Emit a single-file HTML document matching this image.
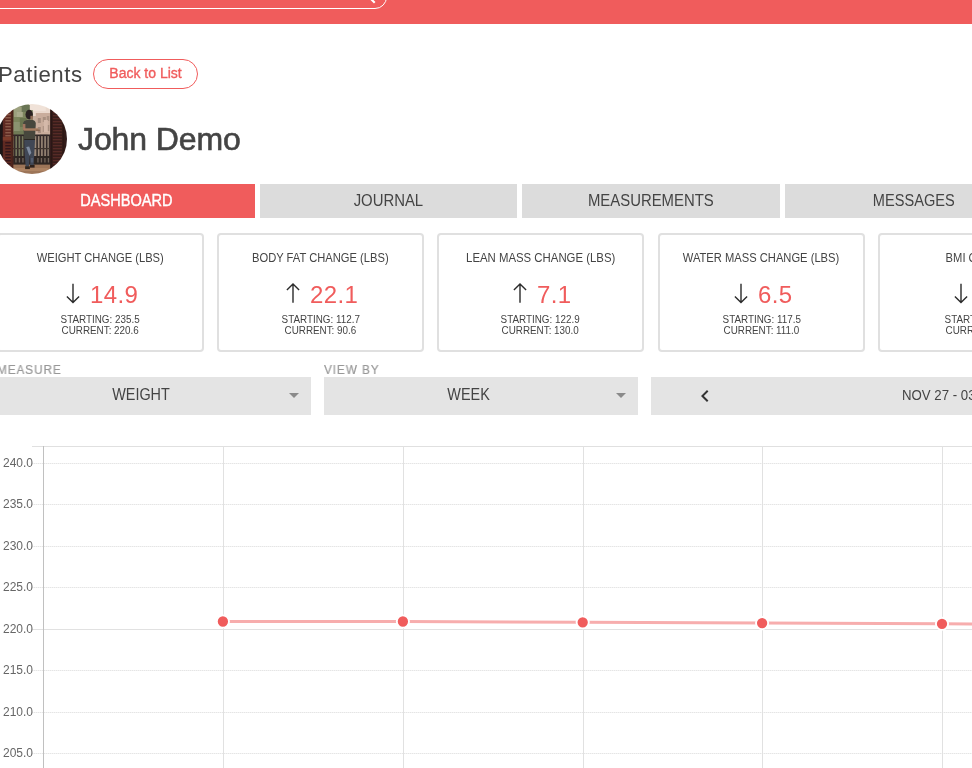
<!DOCTYPE html>
<html lang="en">
<head>
<meta charset="utf-8">
<title>Patients - John Demo</title>
<style>
html,body{margin:0;padding:0;}
body{width:972px;height:768px;overflow:hidden;background:#fff;position:relative;font-family:"Liberation Sans",sans-serif;color:#444;}
.abs{position:absolute;}
.patients,.back,.name,.card .n,.lbl,.ylab,.date{will-change:transform;}
.sx{display:inline-block;white-space:nowrap;}
.hdr{left:0;top:0;width:972px;height:24px;background:#f05c5c;}
.search{left:-40px;top:-22px;width:424.5px;height:29.3px;border:1px solid #fff;border-radius:12px;}
.patients{left:-2.5px;top:60.8px;letter-spacing:0.55px;font-size:22.2px;line-height:28px;color:#444;white-space:nowrap;}
.back{left:93px;top:59px;width:103px;height:28px;border:1px solid #f05c5c;border-radius:15px;color:#f05c5c;font-size:14px;line-height:26px;text-align:center;-webkit-text-stroke:0.35px #f05c5c;}
.name{left:77.5px;top:120px;font-size:32px;letter-spacing:-0.1px;line-height:38px;color:#444;white-space:nowrap;-webkit-text-stroke:0.6px #444;}
.tab{top:184px;height:34px;background:#dcdcdc;color:#444;font-size:15.6px;line-height:34px;text-align:center;}
.tab.on{background:#f05c5c;color:#fff;-webkit-text-stroke:0.4px #fff;}
.card{top:233px;width:203px;height:115px;border:2px solid #e0e0e0;border-radius:4px;background:#fff;text-align:center;}
.card .t{position:absolute;left:0;right:0;top:16px;font-size:12px;line-height:14px;color:#444;}
.card .v{position:absolute;left:0;right:0;top:45px;height:30px;}
.card .n{position:absolute;top:0;font-size:24px;line-height:30px;letter-spacing:0.4px;color:#f05c5c;white-space:nowrap;}
.card .s{position:absolute;left:0;right:0;font-size:10px;line-height:11px;color:#444;}
.lbl{top:363px;font-size:12.5px;line-height:14px;letter-spacing:1px;color:#979797;white-space:nowrap;transform:scaleX(0.94);transform-origin:0 50%;-webkit-text-stroke:0.2px #979797;}
.sel{top:377px;height:38px;width:314px;background:#e4e4e4;}
.sel .tx{position:absolute;left:0;width:288px;top:0;line-height:36px;font-size:16px;text-align:center;color:#444;}
.sel .ar{position:absolute;left:292px;top:16px;width:0;height:0;border-left:5px solid transparent;border-right:5px solid transparent;border-top:5px solid #8a8a8a;}
.date{left:902px;top:377px;line-height:36.4px;font-size:14px;color:#444;white-space:nowrap;}
.ylab{left:0;width:33px;text-align:right;font-size:12px;line-height:14px;color:#666;white-space:nowrap;}
</style>
</head>
<body>
<div class="abs hdr"></div>
<div class="abs search"></div>
<svg class="abs" style="left:354.7px;top:-17.2px" width="24" height="24" viewBox="0 0 24 24"><path d="M15.5 14h-.79l-.28-.27C15.41 12.59 16 11.11 16 9.5 16 5.91 13.09 3 9.5 3S3 5.91 3 9.5 5.91 16 9.5 16c1.61 0 3.09-.59 4.23-1.57l.27.28v.79l5 4.99L20.49 19l-4.99-5zm-6 0C7.01 14 5 11.99 5 9.5S7.01 5 9.5 5 14 7.01 14 9.5 11.99 14 9.5 14z" fill="#fff"/></svg>
<div class="abs patients">Patients</div>
<div class="abs back"><span class="sx">Back to List</span></div>
<svg class="abs" style="left:-2.8px;top:104.0px" width="70" height="70" viewBox="-2.8 104.0 70 70">
<defs><clipPath id="avc"><circle cx="32.2" cy="139.0" r="35"/></clipPath>
<filter id="avb" x="-10%" y="-10%" width="120%" height="120%"><feGaussianBlur stdDeviation="0.6"/></filter></defs>
<g clip-path="url(#avc)"><g filter="url(#avb)">
<rect x="-6.0" y="100.0" width="80.0" height="80.0" fill="#c9b2a2"/>
<rect x="26.0" y="100.0" width="26.0" height="16.0" fill="#ead9cd"/>
<rect x="30.0" y="103.0" width="16.0" height="8.0" fill="#f0e2d8"/>
<rect x="36.0" y="113.0" width="15.0" height="45.0" fill="#c9ad9c"/>
<rect x="38.0" y="118.0" width="3.0" height="5.0" fill="#a58d7e"/>
<rect x="43.0" y="117.0" width="3.0" height="5.0" fill="#a89080"/>
<rect x="47.0" y="116.0" width="2.5" height="5.0" fill="#ab9383"/>
<rect x="38.0" y="127.0" width="3.0" height="6.0" fill="#a38b7c"/>
<rect x="43.0" y="126.0" width="3.0" height="6.0" fill="#a58d7e"/>
<rect x="47.0" y="125.0" width="2.5" height="6.0" fill="#a89080"/>
<rect x="40.0" y="134.0" width="8.0" height="3.0" fill="#b59c8b"/>
<rect x="44.0" y="120.0" width="4.0" height="12.0" fill="#d4b9a9"/>
<rect x="12.0" y="104.0" width="17.0" height="33.0" fill="#7b855d"/>
<rect x="14.0" y="107.0" width="8.0" height="10.0" fill="#9ca07e"/>
<rect x="20.0" y="118.0" width="7.0" height="9.0" fill="#6b7550"/>
<rect x="13.0" y="122.0" width="7.0" height="10.0" fill="#8a9270"/>
<rect x="22.0" y="105.0" width="8.0" height="7.0" fill="#6a7555"/>
<rect x="28.0" y="110.0" width="5.0" height="10.0" fill="#868d6c"/>
<rect x="17.0" y="112.0" width="6.0" height="5.0" fill="#a9ab8c"/>
<rect x="14.0" y="131.0" width="10.0" height="5.0" fill="#707a56"/>
<rect x="12.0" y="135.0" width="13.0" height="30.0" fill="#76785c"/>
<rect x="25.0" y="135.0" width="26.0" height="30.0" fill="#9a8878"/>
<rect x="12.0" y="134.5" width="39.0" height="1.6" fill="#2f2726"/>
<rect x="14.0" y="135.0" width="1.6" height="30.0" fill="#352c2a"/>
<rect x="17.2" y="135.0" width="1.6" height="30.0" fill="#352c2a"/>
<rect x="20.4" y="135.0" width="1.6" height="30.0" fill="#352c2a"/>
<rect x="23.6" y="135.0" width="1.6" height="30.0" fill="#352c2a"/>
<rect x="36.5" y="135.0" width="1.6" height="30.0" fill="#352c2a"/>
<rect x="39.7" y="135.0" width="1.6" height="30.0" fill="#352c2a"/>
<rect x="42.9" y="135.0" width="1.6" height="30.0" fill="#352c2a"/>
<rect x="46.1" y="135.0" width="1.6" height="30.0" fill="#352c2a"/>
<rect x="49.0" y="135.0" width="1.6" height="30.0" fill="#352c2a"/>
<rect x="12.0" y="156.0" width="39.0" height="9.0" fill="#2e2524"/>
<rect x="15.5" y="158.0" width="1.3" height="4.5" fill="#6f6459"/>
<rect x="19.0" y="158.0" width="1.3" height="4.5" fill="#6f6459"/>
<rect x="22.5" y="158.0" width="1.3" height="4.5" fill="#6f6459"/>
<rect x="37.5" y="158.0" width="1.3" height="4.5" fill="#6f6459"/>
<rect x="41.0" y="158.0" width="1.3" height="4.5" fill="#6f6459"/>
<rect x="44.5" y="158.0" width="1.3" height="4.5" fill="#6f6459"/>
<rect x="48.0" y="158.0" width="1.3" height="4.5" fill="#6f6459"/>
<rect x="12.0" y="148.0" width="39.0" height="1.2" fill="#40352f"/>
<rect x="8.0" y="164.6" width="48.0" height="12.0" fill="#9d7558"/>
<rect x="14.0" y="168.0" width="34.0" height="3.0" fill="#ad8364"/>
<rect x="-6.0" y="100.0" width="9.5" height="80.0" fill="#1c1518"/>
<rect x="3.0" y="100.0" width="10.5" height="80.0" fill="#5e2c22"/>
<rect x="5.5" y="108.0" width="5.5" height="1.4" fill="#8a5a48"/>
<rect x="5.5" y="111.0" width="5.5" height="1.4" fill="#8a5a48"/>
<rect x="5.5" y="114.0" width="5.5" height="1.4" fill="#8a5a48"/>
<rect x="5.5" y="117.0" width="5.5" height="1.4" fill="#8a5a48"/>
<rect x="5.5" y="120.0" width="5.5" height="1.4" fill="#8a5a48"/>
<rect x="5.5" y="123.0" width="5.5" height="1.4" fill="#8a5a48"/>
<rect x="5.5" y="126.0" width="5.5" height="1.4" fill="#8a5a48"/>
<rect x="5.5" y="129.0" width="5.5" height="1.4" fill="#8a5a48"/>
<rect x="5.5" y="132.0" width="5.5" height="1.4" fill="#8a5a48"/>
<rect x="5.5" y="135.0" width="5.5" height="1.4" fill="#8a5a48"/>
<rect x="5.5" y="142.0" width="5.5" height="1.5" fill="#35191a"/>
<rect x="5.5" y="145.0" width="5.5" height="1.5" fill="#35191a"/>
<rect x="5.5" y="148.0" width="5.5" height="1.5" fill="#35191a"/>
<rect x="5.5" y="151.0" width="5.5" height="1.5" fill="#35191a"/>
<rect x="5.5" y="154.0" width="5.5" height="1.5" fill="#35191a"/>
<rect x="5.5" y="157.0" width="5.5" height="1.5" fill="#35191a"/>
<rect x="5.5" y="160.0" width="5.5" height="1.5" fill="#35191a"/>
<rect x="5.5" y="163.0" width="5.5" height="1.5" fill="#35191a"/>
<rect x="5.5" y="166.0" width="5.5" height="1.5" fill="#35191a"/>
<rect x="5.5" y="169.0" width="5.5" height="1.5" fill="#35191a"/>
<rect x="3.0" y="137.0" width="10.5" height="3.5" fill="#7c3b2a"/>
<rect x="11.5" y="100.0" width="1.8" height="80.0" fill="#4a241c"/>
<rect x="50.5" y="100.0" width="20.0" height="80.0" fill="#391f1c"/>
<rect x="53.0" y="106.0" width="9.0" height="1.3" fill="#572c25"/>
<rect x="53.0" y="109.0" width="9.0" height="1.3" fill="#572c25"/>
<rect x="53.0" y="112.0" width="9.0" height="1.3" fill="#572c25"/>
<rect x="53.0" y="115.0" width="9.0" height="1.3" fill="#572c25"/>
<rect x="53.0" y="118.0" width="9.0" height="1.3" fill="#572c25"/>
<rect x="53.0" y="121.0" width="9.0" height="1.3" fill="#572c25"/>
<rect x="53.0" y="124.0" width="9.0" height="1.3" fill="#572c25"/>
<rect x="53.0" y="127.0" width="9.0" height="1.3" fill="#572c25"/>
<rect x="53.0" y="130.0" width="9.0" height="1.3" fill="#572c25"/>
<rect x="53.0" y="133.0" width="9.0" height="1.3" fill="#572c25"/>
<rect x="53.0" y="136.0" width="9.0" height="1.3" fill="#572c25"/>
<rect x="53.0" y="139.0" width="9.0" height="1.3" fill="#572c25"/>
<rect x="53.0" y="142.0" width="9.0" height="1.3" fill="#572c25"/>
<rect x="53.0" y="145.0" width="9.0" height="1.3" fill="#572c25"/>
<rect x="53.0" y="148.0" width="9.0" height="1.3" fill="#572c25"/>
<rect x="53.0" y="151.0" width="9.0" height="1.3" fill="#572c25"/>
<rect x="53.0" y="154.0" width="9.0" height="1.3" fill="#572c25"/>
<rect x="53.0" y="157.0" width="9.0" height="1.3" fill="#572c25"/>
<rect x="53.0" y="160.0" width="9.0" height="1.3" fill="#572c25"/>
<rect x="53.0" y="163.0" width="9.0" height="1.3" fill="#572c25"/>
<rect x="53.0" y="166.0" width="9.0" height="1.3" fill="#572c25"/>
<rect x="53.0" y="169.0" width="9.0" height="1.3" fill="#572c25"/>
<rect x="50.5" y="100.0" width="2.0" height="80.0" fill="#2b1715"/>
<rect x="62.5" y="100.0" width="2.0" height="80.0" fill="#2f1917"/>
<rect x="64.5" y="100.0" width="6.0" height="80.0" fill="#331b1a"/>
<ellipse cx="29.4" cy="114.6" rx="3.7" ry="4.9" fill="#2a2320"/>
<rect x="30.6" y="115.8" width="2.4" height="3.8" fill="#94705a"/>
<path d="M23.3 123 Q23.8 120.5 27 120 L33 120 Q35.8 120.6 36 123.5 L35.2 139.6 L24.4 139.6 Z" fill="#47473e"/>
<rect x="23.0" y="124.0" width="2.6" height="6.0" fill="#a07660"/>
<rect x="24.0" y="128.3" width="14.5" height="2.4" fill="#a87e62"/>
<rect x="36.0" y="129.6" width="4.0" height="1.5" fill="#8a6852"/>
<rect x="24.6" y="139.0" width="10.6" height="1.2" fill="#2a2624"/>
<path d="M24.4 140 L35.2 140 L34.6 152 L33.8 166 L30.4 166 L30.2 153 L29.2 166.8 L25.8 166.8 L24.8 152 Z" fill="#3f4654"/>
<path d="M26.4 147 L29.4 146.5 L31.6 153 L29.5 155.5 Z" fill="#7e8a9e"/>
<rect x="31.0" y="158.0" width="2.4" height="4.5" fill="#525c70"/>
<rect x="25.3" y="166.3" width="4.8" height="2.8" fill="#33261f"/>
<rect x="30.2" y="165.0" width="4.6" height="2.6" fill="#2f221d"/>
</g></g></svg>
<div class="abs name">John Demo</div>
<div class="abs tab on" style="left:-3px;width:258px"><span class="sx" style="transform:scaleX(0.935);transform-origin:center">DASHBOARD</span></div>
<div class="abs tab" style="left:260px;width:257px"><span class="sx" style="transform:scaleX(0.955);transform-origin:center">JOURNAL</span></div>
<div class="abs tab" style="left:522px;width:258px"><span class="sx" style="transform:scaleX(0.955);transform-origin:center">MEASUREMENTS</span></div>
<div class="abs tab" style="left:785px;width:257px"><span class="sx" style="transform:scaleX(0.935);transform-origin:center">MESSAGES</span></div>
<div class="abs card" style="left:-3px">
  <div class="t"><span class="sx" style="transform:scaleX(0.931);transform-origin:center">WEIGHT CHANGE (LBS)</span></div>
  <div class="v"><svg class="abs" style="left:66.6px;top:3px" width="14" height="21" viewBox="0 0 14 21"><path d="M7 0.7 V19.2 M0.9 13.6 L7 19.5 L13.1 13.6" fill="none" stroke="#2b2b2b" stroke-width="1.4"/></svg><div class="n" style="left:90.6px">14.9</div></div>
  <div class="s" style="top:79px"><span class="sx" style="transform:scaleX(0.985);transform-origin:center">STARTING: 235.5</span></div>
  <div class="s" style="top:90px"><span class="sx" style="transform:scaleX(0.985);transform-origin:center">CURRENT: 220.6</span></div>
</div>
<div class="abs card" style="left:217px">
  <div class="t"><span class="sx" style="transform:scaleX(0.931);transform-origin:center">BODY FAT CHANGE (LBS)</span></div>
  <div class="v"><svg class="abs" style="left:66.6px;top:3px" width="14" height="21" viewBox="0 0 14 21"><path d="M7 19.8 V1.3 M0.9 6.9 L7 1 L13.1 6.9" fill="none" stroke="#2b2b2b" stroke-width="1.4"/></svg><div class="n" style="left:90.6px">22.1</div></div>
  <div class="s" style="top:79px"><span class="sx" style="transform:scaleX(0.985);transform-origin:center">STARTING: 112.7</span></div>
  <div class="s" style="top:90px"><span class="sx" style="transform:scaleX(0.985);transform-origin:center">CURRENT: 90.6</span></div>
</div>
<div class="abs card" style="left:437px">
  <div class="t"><span class="sx" style="transform:scaleX(0.948);transform-origin:center">LEAN MASS CHANGE (LBS)</span></div>
  <div class="v"><svg class="abs" style="left:74.1px;top:3px" width="14" height="21" viewBox="0 0 14 21"><path d="M7 19.8 V1.3 M0.9 6.9 L7 1 L13.1 6.9" fill="none" stroke="#2b2b2b" stroke-width="1.4"/></svg><div class="n" style="left:98.1px">7.1</div></div>
  <div class="s" style="top:79px"><span class="sx" style="transform:scaleX(0.985);transform-origin:center">STARTING: 122.9</span></div>
  <div class="s" style="top:90px"><span class="sx" style="transform:scaleX(0.985);transform-origin:center">CURRENT: 130.0</span></div>
</div>
<div class="abs card" style="left:658px">
  <div class="t"><span class="sx" style="transform:scaleX(0.931);transform-origin:center">WATER MASS CHANGE (LBS)</span></div>
  <div class="v"><svg class="abs" style="left:74.1px;top:3px" width="14" height="21" viewBox="0 0 14 21"><path d="M7 0.7 V19.2 M0.9 13.6 L7 19.5 L13.1 13.6" fill="none" stroke="#2b2b2b" stroke-width="1.4"/></svg><div class="n" style="left:98.1px">6.5</div></div>
  <div class="s" style="top:79px"><span class="sx" style="transform:scaleX(0.985);transform-origin:center">STARTING: 117.5</span></div>
  <div class="s" style="top:90px"><span class="sx" style="transform:scaleX(0.985);transform-origin:center">CURRENT: 111.0</span></div>
</div>
<div class="abs card" style="left:878px">
  <div class="t"><span class="sx" style="transform:scaleX(0.931);transform-origin:center">BMI CHANGE</span></div>
  <div class="v"><svg class="abs" style="left:74.1px;top:3px" width="14" height="21" viewBox="0 0 14 21"><path d="M7 0.7 V19.2 M0.9 13.6 L7 19.5 L13.1 13.6" fill="none" stroke="#2b2b2b" stroke-width="1.4"/></svg><div class="n" style="left:98.1px">2.0</div></div>
  <div class="s" style="top:79px"><span class="sx" style="transform:scaleX(0.985);transform-origin:center">STARTING: 32.0</span></div>
  <div class="s" style="top:90px"><span class="sx" style="transform:scaleX(0.985);transform-origin:center">CURRENT: 30.0</span></div>
</div>
<div class="abs lbl" style="left:-3px">MEASURE</div>
<div class="abs lbl" style="left:324px">VIEW BY</div>
<div class="abs sel" style="left:-3px"><div class="tx"><span class="sx" style="transform:scaleX(0.9);transform-origin:center">WEIGHT</span></div><div class="ar"></div></div>
<div class="abs sel" style="left:324px"><div class="tx" style="left:1px"><span class="sx" style="transform:scaleX(0.9);transform-origin:center">WEEK</span></div><div class="ar"></div></div>
<div class="abs sel" style="left:651px;width:400px"></div>
<svg class="abs" style="left:693.3px;top:384px" width="24" height="24" viewBox="0 0 24 24"><path d="M15.41 7.41L14 6l-6 6 6 6 1.41-1.41L10.83 12z" fill="#333"/></svg>
<div class="abs date"><span class="sx" style="transform:scaleX(0.945);transform-origin:0 50%">NOV 27 - 03 DEC</span></div>
<svg class="abs" style="left:0;top:430px" width="972" height="338" viewBox="0 430 972 338">
<g shape-rendering="crispEdges">
<rect x="32" y="446" width="941" height="1" fill="#e0e0e0"/>
<rect x="32" y="463" width="941" height="1" fill="#f3f3f3"/>
<line x1="32" y1="463.5" x2="973" y2="463.5" stroke="#e5e5e5" stroke-width="1" stroke-dasharray="1 1"/>
<rect x="32" y="504" width="941" height="1" fill="#f3f3f3"/>
<line x1="32" y1="504.5" x2="973" y2="504.5" stroke="#e5e5e5" stroke-width="1" stroke-dasharray="1 1"/>
<rect x="32" y="546" width="941" height="1" fill="#f3f3f3"/>
<line x1="32" y1="546.5" x2="973" y2="546.5" stroke="#e5e5e5" stroke-width="1" stroke-dasharray="1 1"/>
<rect x="32" y="587" width="941" height="1" fill="#f3f3f3"/>
<line x1="32" y1="587.5" x2="973" y2="587.5" stroke="#e5e5e5" stroke-width="1" stroke-dasharray="1 1"/>
<rect x="32" y="629" width="941" height="1" fill="#e1e1e1"/>
<rect x="32" y="670" width="941" height="1" fill="#f3f3f3"/>
<line x1="32" y1="670.5" x2="973" y2="670.5" stroke="#e5e5e5" stroke-width="1" stroke-dasharray="1 1"/>
<rect x="32" y="712" width="941" height="1" fill="#f3f3f3"/>
<line x1="32" y1="712.5" x2="973" y2="712.5" stroke="#e5e5e5" stroke-width="1" stroke-dasharray="1 1"/>
<rect x="32" y="753" width="941" height="1" fill="#f3f3f3"/>
<line x1="32" y1="753.5" x2="973" y2="753.5" stroke="#e5e5e5" stroke-width="1" stroke-dasharray="1 1"/>
<rect x="223" y="446" width="1" height="330" fill="#e1e1e1"/>
<rect x="403" y="446" width="1" height="330" fill="#e1e1e1"/>
<rect x="583" y="446" width="1" height="330" fill="#e1e1e1"/>
<rect x="762" y="446" width="1" height="330" fill="#e1e1e1"/>
<rect x="942" y="446" width="1" height="330" fill="#e1e1e1"/>
<rect x="43" y="446" width="1" height="330" fill="#c0c0c0"/>
</g>
<polyline points="222.9,621.5 402.9,621.5 582.7,622.3 762.1,623.1 942.0,623.8 1121.8,624.4" fill="none" stroke="#f7adad" stroke-width="3"/>
<circle cx="222.9" cy="621.5" r="6.1" fill="#f05c5c" stroke="#fff" stroke-width="1.9"/>
<circle cx="402.9" cy="621.5" r="6.1" fill="#f05c5c" stroke="#fff" stroke-width="1.9"/>
<circle cx="582.7" cy="622.3" r="6.1" fill="#f05c5c" stroke="#fff" stroke-width="1.9"/>
<circle cx="762.1" cy="623.1" r="6.1" fill="#f05c5c" stroke="#fff" stroke-width="1.9"/>
<circle cx="942.0" cy="623.8" r="6.1" fill="#f05c5c" stroke="#fff" stroke-width="1.9"/>
</svg>
<div class="abs ylab" style="top:455.5px">240.0</div>
<div class="abs ylab" style="top:497.0px">235.0</div>
<div class="abs ylab" style="top:538.5px">230.0</div>
<div class="abs ylab" style="top:580.0px">225.0</div>
<div class="abs ylab" style="top:621.5px">220.0</div>
<div class="abs ylab" style="top:663.0px">215.0</div>
<div class="abs ylab" style="top:704.5px">210.0</div>
<div class="abs ylab" style="top:746.0px">205.0</div>
</body>
</html>
